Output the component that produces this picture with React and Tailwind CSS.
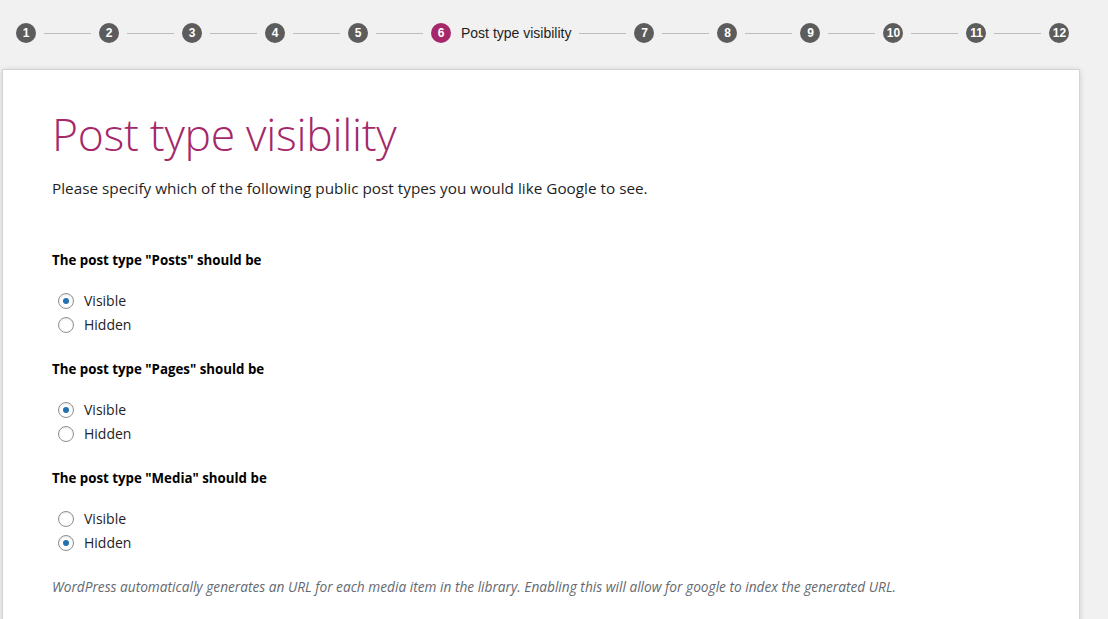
import React from 'react';

const steps = [1, 2, 3, 4, 5, 6, 7, 8, 9, 10, 11, 12];
const activeStep = 6;

const sections = [
  { name: 'Posts', value: 'visible' },
  { name: 'Pages', value: 'visible' },
  { name: 'Media', value: 'hidden' },
];

const Radio = ({ checked, label }) => (
  <label className="flex items-center h-6">
    <span className="ml-[55px] w-4 h-4 rounded-full border border-[#8c8f94] bg-white flex items-center justify-center shadow-[inset_0_1px_2px_rgba(0,0,0,0.1)]">
      {checked && <span className="w-[6px] h-[6px] rounded-full bg-[#2271b1]"></span>}
    </span>
    <span className="ml-[10px] text-[14px] text-[#1d2327]">{label}</span>
  </label>
);

const App = () => {
  return (
    <div className="w-[1108px] h-[619px] overflow-hidden bg-[#f1f1f1]" style={{ fontFamily: '"Open Sans", "Noto Sans", sans-serif' }}>
      <div className="flex items-center h-[69px] pl-4 pb-[3px]">
        {steps.map((n, i) => (
          <React.Fragment key={n}>
            <div className="flex items-center">
              <span
                className={`w-5 h-5 rounded-full flex items-center justify-center text-white text-[12px] font-bold leading-none ${n === activeStep ? 'bg-[#a4286a]' : 'bg-[#5c5c5c]'}`}
                style={{ fontFamily: '"Liberation Sans", Arial, sans-serif' }}
              >
                {n}
              </span>
              {n === activeStep && (
                <span className="ml-[10px] text-[14px] text-[#1e1e1e]" style={{ fontFamily: '"Liberation Sans", Arial, sans-serif' }}>
                  Post type visibility
                </span>
              )}
            </div>
            {i < steps.length - 1 && <div className="w-[47px] h-px bg-[#bdbdbd] mx-2"></div>}
          </React.Fragment>
        ))}
      </div>

      <div className="ml-[2px] w-[1078px] h-[560px] bg-white border border-[#d4d4d4] shadow-[0_1px_6px_rgba(0,0,0,0.15)] pl-[49px] pt-[34px]">
        <h1 className="text-[44.5px] font-light text-[#a4286a] leading-[60px] tracking-[-0.3px]">Post type visibility</h1>
        <p className="mt-[13px] text-[15.3px] text-[#1e1e1e]">
          Please specify which of the following public post types you would like Google to see.
        </p>

        <div className="mt-[50px]">
          {sections.map((s) => (
            <div key={s.name} className="mb-[22px]">
              <div className="text-[13.3px] font-bold text-black h-[20px] leading-[20px]">
                The post type "{s.name}" should be
              </div>
              <div className="mt-[19px] -ml-[49px]">
                <Radio checked={s.value === 'visible'} label="Visible" />
                <Radio checked={s.value === 'hidden'} label="Hidden" />
              </div>
            </div>
          ))}
        </div>

        <p className="mt-[14px] text-[13.7px] italic text-[#646970]">
          WordPress automatically generates an URL for each media item in the library. Enabling this will allow for google to index the generated URL.
        </p>
      </div>
    </div>
  );
};

export default App;
